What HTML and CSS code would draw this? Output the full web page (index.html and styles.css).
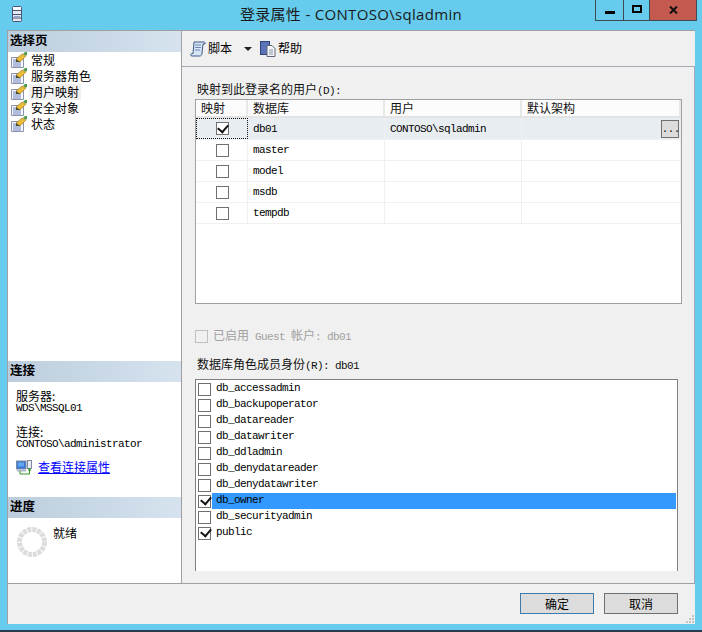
FILE: index.html
```html
<!DOCTYPE html>
<html lang="zh-CN">

<head>
  <meta charset="utf-8">
  <title>登录属性</title>
  <link rel="stylesheet" href="styles.css">
</head>

<body>
  <!-- shared icons -->
  <svg class="defs" width="0" height="0">
    <symbol id="page-icon" viewBox="0 0 16 16">
      <path d="M0.500 5.500h12v10h-12z" fill="#f6f8fc" stroke="#8a94a8" />
      <path d="M2 8h4M2 10h8M2 12h8M2 14h8" stroke="#6c7fc0" />
      <path d="M5 7l6-5 4 2-6 6z" fill="#eebc3c" stroke="#a08024" stroke-width=".7" />
      <path d="M12 2l2-2 2 0v3l-1 .5z" fill="#4c9a46" />
      <path d="M5 7l4 3-4 0z" fill="#57502c" />
    </symbol>
  </svg>

  <header class="titlebar">
    <svg class="app-icon" width="10" height="16" viewBox="0 0 10 16">
      <rect x=".5" y=".5" width="9" height="15" rx="1" fill="#e4e8f0" stroke="#4a5478" />
      <path d="M1 4.500h8M1 8.500h8M1 12h8" stroke="#4a5478" />
      <path d="M1 1h8v3H1z" fill="#fff" />
      <path d="M2 10h6v1.500H2z" fill="#9aa6c8" />
    </svg>
    <div class="title">登录属性 - CONTOSO\sqladmin</div>
    <div class="win-buttons">
      <div class="win-btn win-min"><span></span></div>
      <div class="win-btn win-max"><span></span></div>
      <div class="win-btn win-close">
        <svg width="9" height="8" viewBox="0 0 9 8">
          <path d="M1 0.500l7 7M8 0.500l-7 7" stroke="#111" stroke-width="2" />
        </svg>
      </div>
    </div>
  </header>

  <div class="window">
    <div class="window-main">
      <aside class="sidebar">
        <section>
          <h2 class="side-head">选择页</h2>
          <ul class="page-list">
            <li><svg class="page-icon"><use href="#page-icon" /></svg><span>常规</span></li>
            <li><svg class="page-icon"><use href="#page-icon" /></svg><span>服务器角色</span></li>
            <li class="current"><svg class="page-icon"><use href="#page-icon" /></svg><span>用户映射</span></li>
            <li><svg class="page-icon"><use href="#page-icon" /></svg><span>安全对象</span></li>
            <li><svg class="page-icon"><use href="#page-icon" /></svg><span>状态</span></li>
          </ul>
        </section>

        <section class="side-bottom">
          <h2 class="side-head">连接</h2>
          <div class="conn-info">
            <div class="conn-label">服务器:</div>
            <div class="mono">WDS\MSSQL01</div>
            <div class="conn-label conn-gap">连接:</div>
            <div class="mono">CONTOSO\administrator</div>
          </div>
          <div class="conn-link">
            <svg width="16" height="15" viewBox="0 0 16 15">
              <rect x=".5" y="1" width="9.500" height="8" fill="#3a78d8" stroke="#7d8aa0" />
              <rect x="2" y="2.500" width="6" height="4" fill="#62a8f0" />
              <path d="M1 10h9v1.500H1z" fill="#b0b8c8" />
              <rect x="11.500" y=".5" width="4" height="8" fill="#e8ecf2" stroke="#7d8aa0" />
              <path d="M4 11v3h9.500v-4" fill="none" stroke="#2f9a1e" />
              <path d="M11.500 10.500h4l-2-2.500z" fill="#2f9a1e" />
            </svg>
            <a href="#">查看连接属性</a>
          </div>

          <h2 class="side-head">进度</h2>
          <div class="progress">
            <svg width="30" height="30" viewBox="0 0 30 30">
              <circle cx="15" cy="15" r="12.500" fill="none" stroke="#dcdcdc" stroke-width="5"
                stroke-dasharray="4 .9" />
            </svg>
            <span>就绪</span>
          </div>
        </section>
      </aside>

      <main class="content">
        <div class="toolbar">
          <svg width="16" height="16" viewBox="0 0 16 16">
            <path d="M4 1h10c1 0 1.500 1 1 2h-2l-1 9c0 2-1 3-2.500 3H2c-1.500 0-2-2-.5-2.500H3z" fill="#d8e4f4"
              stroke="#3e5a88" />
            <path d="M5 4h6M5 6.500h6M5 9h5" stroke="#6a88b4" />
          </svg>
          <span class="tool-label">脚本</span>
          <span class="caret"></span>
          <svg class="help-icon" width="16" height="16" viewBox="0 0 16 16">
            <rect x=".5" y=".5" width="9" height="13" fill="#5b74b8" stroke="#32427c" />
            <path d="M7 4.500h5l3 3v8H7z" fill="#f4f6fa" stroke="#5a6478" />
            <path d="M9 9h4M9 11h4M9 13h4" stroke="#8a94a8" />
          </svg>
          <span class="tool-label">帮助</span>
        </div>

        <div class="panel">
          <label class="field-label">映射到此登录名的用户<span class="mono">(D):</span></label>
          <div class="grid">
            <div class="grid-row grid-head">
              <div class="cell">映射</div>
              <div class="cell">数据库</div>
              <div class="cell">用户</div>
              <div class="cell">默认架构</div>
            </div>
            <div class="grid-row row-selected">
              <div class="cell cell-check cell-focus"><span class="check on"></span></div>
              <div class="cell mono">db01</div>
              <div class="cell mono">CONTOSO\sqladmin</div>
              <div class="cell cell-schema"><span class="more-btn">...</span></div>
            </div>
            <div class="grid-row">
              <div class="cell cell-check"><span class="check"></span></div>
              <div class="cell mono">master</div>
              <div class="cell"></div>
              <div class="cell"></div>
            </div>
            <div class="grid-row">
              <div class="cell cell-check"><span class="check"></span></div>
              <div class="cell mono">model</div>
              <div class="cell"></div>
              <div class="cell"></div>
            </div>
            <div class="grid-row">
              <div class="cell cell-check"><span class="check"></span></div>
              <div class="cell mono">msdb</div>
              <div class="cell"></div>
              <div class="cell"></div>
            </div>
            <div class="grid-row">
              <div class="cell cell-check"><span class="check"></span></div>
              <div class="cell mono">tempdb</div>
              <div class="cell"></div>
              <div class="cell"></div>
            </div>
          </div>

          <div class="guest">
            <span class="check disabled"></span>
            <span>已启用<span class="mono"> Guest </span>帐户<span class="mono">: db01</span></span>
          </div>

          <label class="field-label role-label">数据库角色成员身份<span class="mono">(R): db01</span></label>
          <div class="role-list">
            <div class="role"><span class="check"></span><span class="role-name mono">db_accessadmin</span></div>
            <div class="role"><span class="check"></span><span class="role-name mono">db_backupoperator</span></div>
            <div class="role"><span class="check"></span><span class="role-name mono">db_datareader</span></div>
            <div class="role"><span class="check"></span><span class="role-name mono">db_datawriter</span></div>
            <div class="role"><span class="check"></span><span class="role-name mono">db_ddladmin</span></div>
            <div class="role"><span class="check"></span><span class="role-name mono">db_denydatareader</span></div>
            <div class="role"><span class="check"></span><span class="role-name mono">db_denydatawriter</span></div>
            <div class="role role-active"><span class="check on"></span><span class="role-name mono">db_owner</span></div>
            <div class="role"><span class="check"></span><span class="role-name mono">db_securityadmin</span></div>
            <div class="role"><span class="check on"></span><span class="role-name mono">public</span></div>
          </div>
        </div>
      </main>
    </div>

    <footer class="footer">
      <button class="btn btn-default">确定</button>
      <button class="btn">取消</button>
      <svg class="grip" width="8" height="8" viewBox="0 0 8 8">
        <path d="M6 0h2v2H6zM3 3h2v2H3zM6 3h2v2H6zM0 6h2v2H0zM3 6h2v2H3zM6 6h2v2H6z" fill="#c4c4c4" />
      </svg>
    </footer>
  </div>

  <div class="taskbar"></div>
</body>

</html>
```

FILE: styles.css
```css
* {
  box-sizing: border-box;
}

html,
body {
  margin: 0;
  height: 100%;
}

body {
  width: 702px;
  height: 632px;
  overflow: hidden;
  display: flex;
  flex-direction: column;
  background-color: #66cbec;
  color: #000;
  font-family: "Noto Sans CJK SC", sans-serif;
  font-size: 12px;
  line-height: 16px;
}

.defs {
  display: block;
  height: 0;
}

.mono {
  font-family: "Liberation Mono", monospace;
  font-size: 11px;
  letter-spacing: -0.6px;
  white-space: pre;
}

/* Title bar */
.titlebar {
  height: 30px;
  flex: none;
  display: grid;
  grid-template-columns: 1fr auto 1fr;
  align-items: start;
}

.app-icon {
  margin: 6px 0 0 12px;
}

.title {
  padding-top: 4px;
  font-family: "Open Sans", "Noto Sans CJK SC", sans-serif;
  font-size: 15px;
  line-height: 20px;
  letter-spacing: 0.32px;
  color: #1a1a1a;
}

.win-buttons {
  justify-self: end;
  display: flex;
  height: 21px;
  margin-right: 5px;
  border: 1px solid #3c4a52;
  border-top: 0;
}

.win-btn {
  display: flex;
  align-items: center;
  justify-content: center;
  border-left: 1px solid #3c4a52;
}

.win-btn:first-child {
  border-left: 0;
}

.win-min {
  width: 27px;
}

.win-min span {
  width: 10px;
  height: 3px;
  margin-top: 5px;
  background-color: #000;
}

.win-max {
  width: 26px;
}

.win-max span {
  width: 10px;
  height: 8px;
  margin-bottom: 2px;
  border: 2px solid #000;
}

.win-close {
  width: 47px;
  background-color: #c4594f;
}

/* Window body */
.window {
  height: 594px;
  flex: none;
  margin: 0 7px;
  display: flex;
  flex-direction: column;
  background-color: #f0f0f0;
  border-top: 1px solid #a0a0a0;
  border-left: 1px solid #a0a0a0;
}

.window-main {
  flex: 1;
  min-height: 0;
  display: flex;
}

/* Left side */
.sidebar {
  width: 174px;
  flex: none;
  display: flex;
  flex-direction: column;
  justify-content: space-between;
  background-color: #fff;
  border-right: 1px solid #a0a0a0;
}

.side-head {
  margin: 0;
  height: 21px;
  padding-left: 2px;
  background: linear-gradient(to right, #bccddd, #d6e3ef);
  font-size: 12.500px;
  font-weight: bold;
  line-height: 17px;
}

.page-list {
  list-style: none;
  margin: 0;
  padding: 0;
}

.page-list li {
  height: 16px;
  display: flex;
  align-items: center;
  padding-left: 3px;
}

.page-list li span {
  padding: 0 2px;
  margin-left: 2px;
}

.page-list li.current span {
  background-color: #f0f0f0;
}

.page-icon {
  width: 16px;
  height: 16px;
  flex: none;
}

.side-bottom {
  height: 222px;
}

.conn-info {
  padding: 8px 0 0 8px;
  height: 77px;
  line-height: 12px;
}

.conn-gap {
  margin-top: 12px;
}

.conn-link {
  display: flex;
  align-items: center;
  gap: 6px;
  height: 16px;
  padding-left: 8px;
  margin-bottom: 22px;
}

.conn-link a {
  color: #0000ff;
}

.progress {
  display: flex;
  align-items: flex-start;
  gap: 6px;
  padding: 9px 0 0 9px;
}

.progress span {
  margin-top: -2px;
}

/* Right side */
.content {
  flex: 1;
  min-width: 0;
  display: flex;
  flex-direction: column;
}

.toolbar {
  height: 36px;
  flex: none;
  display: flex;
  align-items: center;
  padding: 0 0 0 8px;
  border-bottom: 1px solid #a9a9b5;
}

.tool-label {
  margin-left: 2px;
  margin-top: -2px;
}

.caret {
  width: 0;
  height: 0;
  margin: 0 8px 0 12px;
  border-left: 4px solid transparent;
  border-right: 4px solid transparent;
  border-top: 4px solid #222;
}

.help-icon {
  flex: none;
}

.panel {
  flex: 1;
  min-height: 0;
  padding: 14px 12px 0 13px;
  border-right: 1px solid #a9a9b5;
  display: flex;
  flex-direction: column;
}

.field-label {
  display: block;
  height: 18px;
  padding-left: 2px;
  line-height: 16px;
  color: #111;
}

/* Mapping grid */
.grid {
  height: 205px;
  width: 487px;
  flex: none;
  background-color: #fff;
  border: 1px solid #a0a0a0;
}

.grid-row {
  display: grid;
  grid-template-columns: 52px 137px 137px 1fr;
  height: 21px;
  border-bottom: 1px solid #f0f0f0;
}

.grid-head {
  height: 18px;
  background-color: #fcfcfc;
  border-bottom: 2px solid #e4e4e4;
}

.row-selected {
  height: 22px;
  background-color: #e8edf1;
}

.cell {
  display: flex;
  align-items: center;
  padding-left: 5px;
  border-right: 1px solid #f0f0f0;
  white-space: pre;
}

.grid-head .cell {
  border-right: 2px solid #e8e8e8;
  color: #111;
}

.cell-check {
  justify-content: center;
  padding-left: 1px;
}

.cell-focus {
  outline: 1px dotted #111;
  outline-offset: -1px;
}

.cell-schema {
  justify-content: flex-end;
  padding-right: 2px;
  border-right: 0;
}

.more-btn {
  width: 18px;
  height: 18px;
  border: 1px solid #707070;
  background-color: #dcdcdc;
  font-family: "Liberation Mono", monospace;
  font-size: 10px;
  line-height: 18px;
  letter-spacing: 0;
  text-align: center;
}

/* Check boxes */
.check {
  position: relative;
  display: inline-block;
  width: 13px;
  height: 13px;
  flex: none;
  background-color: #fff;
  border: 1px solid #707070;
}

.check.on::after {
  content: "";
  position: absolute;
  left: 1.500px;
  top: 0.500px;
  width: 8px;
  height: 5px;
  border-left: 2.500px solid #111;
  border-bottom: 2.500px solid #111;
  transform: rotate(-50deg);
}

.check.disabled {
  border-color: #c0c0c0;
  background-color: #f0f0f0;
}

.guest {
  display: flex;
  align-items: center;
  gap: 5px;
  height: 16px;
  margin-top: 24px;
  color: #a0a0a0;
}

.role-label {
  margin-top: 12px;
  height: 23px;
}

/* Role list */
.role-list {
  width: 483px;
  height: 192px;
  flex: none;
  padding-top: 1px;
  padding-right: 1px;
  background-color: #fff;
  border: 1px solid #808080;
  border-bottom: 0;
}

.role {
  display: flex;
  align-items: center;
  height: 16px;
  padding-left: 2px;
}

.role-name {
  flex: 1;
  height: 16px;
  line-height: 14px;
  padding-left: 4px;
  margin-left: 1px;
}

.role-active .role-name {
  background-color: #3399ff;
}

/* Footer */
.footer {
  position: relative;
  height: 41px;
  flex: none;
  display: flex;
  justify-content: flex-end;
  gap: 10px;
  padding: 9px 17px 0 0;
  border-top: 1px solid #a0a0a0;
}

.btn {
  width: 74px;
  height: 21px;
  padding: 0;
  border: 1px solid #707070;
  background-color: #dcdcdc;
  font-family: "Noto Sans CJK SC", sans-serif;
  font-size: 12px;
  line-height: 17px;
  color: #000;
}

.btn-default {
  border-color: #3d7bad;
}

.grip {
  position: absolute;
  right: 1px;
  bottom: 1px;
}

.taskbar {
  height: 2px;
  flex: none;
  margin-top: auto;
  background-color: #2b3a4a;
}
```
